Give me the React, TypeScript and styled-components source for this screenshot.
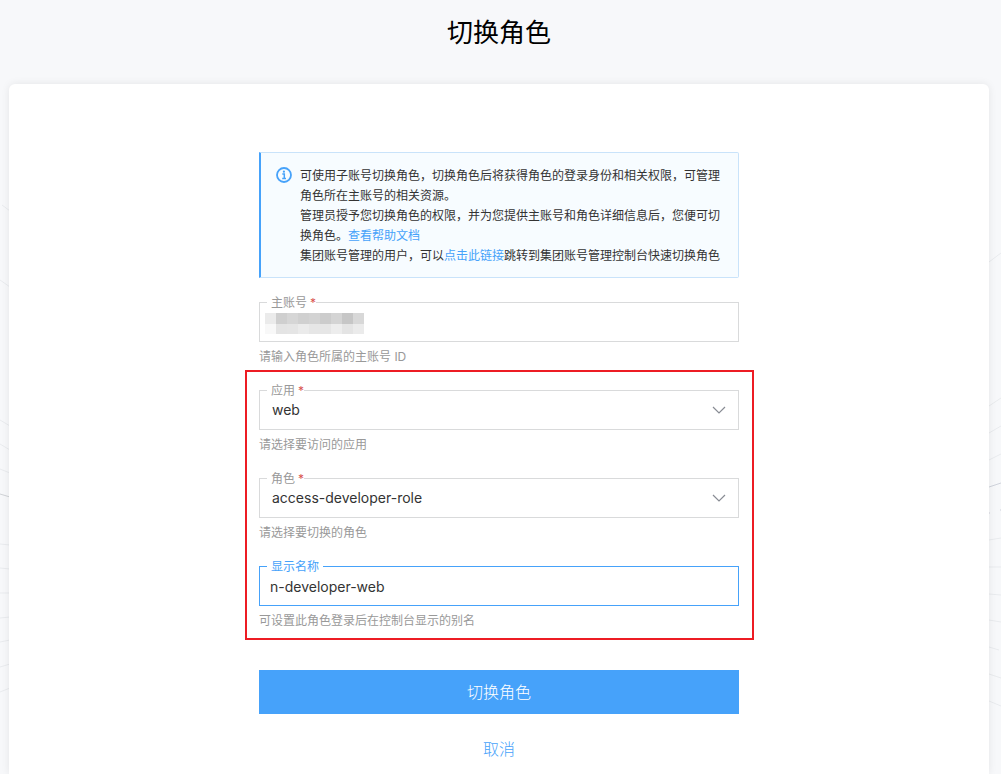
import React from "react";
import styled, { createGlobalStyle } from "styled-components";

const GlobalStyle = createGlobalStyle`
  *, *::before, *::after { box-sizing: border-box; }
  body {
    margin: 0;
    background: #f7f8fa;
    font-family: Inter, "Noto Sans CJK SC", sans-serif;
    font-size: 12px;
    line-height: 20px;
    color: #333;
  }
`;

const Page = styled.div`
  position: relative;
  min-height: 100vh;
  display: flex;
  flex-direction: column;
  padding: 0 12px 0 9px;
  overflow: hidden;
`;

const Pattern = styled.svg<{ $side: "left" | "right" }>`
  position: absolute;
  top: 0;
  ${(p) => p.$side}: 0;
  fill: none;
  stroke: #e9ebee;
`;

const Title = styled.h1`
  margin: 13px 0 31px;
  font-size: 26px;
  line-height: 40px;
  font-weight: 400;
  text-align: center;
  color: #000;
`;

const Card = styled.main`
  position: relative;
  flex: 1;
  display: flex;
  justify-content: center;
  padding: 68px 16px 8px;
  background: #fff;
  border-radius: 6px 6px 0 0;
  box-shadow: 0 0 8px rgba(0, 0, 0, 0.08);
`;

const Form = styled.form`
  width: 100%;
  max-width: 480px;
  display: flex;
  flex-direction: column;
`;

const Notice = styled.section`
  display: flex;
  align-items: flex-start;
  gap: 8px;
  padding: 13px 8px 11px 15px;
  margin-bottom: 24px;
  background: #f7fcff;
  border: 1px solid #c9e3fa;
  border-left: 2px solid #46a2fa;
  border-radius: 0 2px 2px 0;
`;

const NoticeIcon = styled.svg`
  flex: none;
  width: 16px;
  height: 16px;
  margin-top: 1px;
`;

const NoticeText = styled.div`
  flex: 1;
`;

const Paragraph = styled.p`
  margin: 0;
`;

const Link = styled.a`
  color: #46a2fa;
  text-decoration: none;
`;

const Field = styled.div``;

const Box = styled.div`
  position: relative;
  height: 40px;
`;

const Label = styled.label<{ $required?: boolean; $active?: boolean }>`
  position: absolute;
  top: -9px;
  left: 8px;
  z-index: 1;
  padding: 0 ${(p) => (p.$required ? 0 : 4)}px 0 4px;
  background: #fff;
  color: ${(p) => (p.$active ? "#46a2fa" : "#999")};
`;

const Star = styled.span`
  margin-left: 3px;
  color: #d9534f;
`;

const TextInput = styled.input<{ $active?: boolean }>`
  width: 100%;
  height: 40px;
  padding: 0 10px;
  border: 1px solid ${(p) => (p.$active ? "#46a2fa" : "#d9dadb")};
  border-radius: 0;
  background: #fff;
  color: #333;
  font: inherit;
  font-size: 14px;
  outline: none;
`;

const Select = styled.select`
  appearance: none;
  width: 100%;
  height: 40px;
  padding: 0 36px 0 12px;
  border: 1px solid #d9dadb;
  border-radius: 0;
  background: #fff;
  color: #333;
  font: inherit;
  font-size: 14px;
  outline: none;
`;

const Arrow = styled.svg`
  position: absolute;
  top: 16px;
  right: 13px;
  width: 14px;
  height: 8px;
  pointer-events: none;
`;

const Mosaic = styled.svg`
  position: absolute;
  top: 11px;
  left: 6px;
  width: 99px;
  height: 21px;
`;

const Hint = styled.p`
  margin: 4px 0 0;
  line-height: 22px;
  color: #999;
`;

const Highlight = styled.div`
  display: flex;
  flex-direction: column;
  gap: 22px;
  margin: 2px -15px 30px -14px;
  padding: 18px 13px 6px 12px;
  border: 2px solid #ed1c24;
`;

const Submit = styled.button`
  height: 44px;
  border: 0;
  background: #46a2fa;
  color: #fff;
  font: inherit;
  font-size: 16px;
  font-weight: 300;
  cursor: pointer;
`;

const Cancel = styled.button`
  align-self: center;
  margin-top: 20px;
  padding: 0 8px;
  border: 0;
  background: none;
  color: #46a2fa;
  font: inherit;
  font-size: 16px;
  font-weight: 300;
  line-height: 30px;
  cursor: pointer;
`;

const MOSAIC = [
  ["#ebebeb", "#cfcfcf", "#d6d6d6", "#d0d0d0", "#d3d3d3", "#cccccc", "#d4d4d4", "#c6c6c6", "#d8d8d8"],
  ["#f8f8f8", "#e4e4e4", "#e5e5e5", "#ebebeb", "#e6e6e6", "#e6e6e6", "#ededed", "#e4e4e4", "#ebebeb"],
];

function SelectField({ id, label, value, hint }: { id: string; label: string; value: string; hint: string }) {
  return (
    <Field>
      <Box>
        <Label htmlFor={id} $required>
          {label}
          <Star>*</Star>
        </Label>
        <Select id={id} defaultValue={value}>
          <option>{value}</option>
        </Select>
        <Arrow viewBox="0 0 14 8" fill="none" stroke="#888c94" strokeWidth="1.2">
          <path d="M1 1 L7 7 L13 1" />
        </Arrow>
      </Box>
      <Hint>{hint}</Hint>
    </Field>
  );
}

export default function App() {
  return (
    <Page>
      <GlobalStyle />
      <Pattern $side="left" width="10" height="774" aria-hidden="true">
        <path d="M2 205 L10 211 M0 280 L10 287 M0 420 L10 426 M0 444 L10 450 M0 469 L10 473 M0 544 L10 545 M0 568 L10 569 M0 593 L10 593 M0 618 L10 617 M0 642 L10 640 M0 667 L10 664 M0 692 L10 688" />
        <path d="M0 494 L10 497" stroke="#cfd2d6" />
      </Pattern>
      <Pattern $side="right" width="12" height="774" aria-hidden="true">
        <path d="M0 262 L12 253 M0 406 L12 398 M0 433 L12 426 M0 460 L12 454 M0 540 L12 538 M0 567 L12 567 M0 594 L12 595 M0 620 L12 622 M0 647 L10 650 M0 674 L12 678 M0 701 L12 706" />
        <path d="M0 487 L12 483 M0 513 H1 M11 510 H12" stroke="#cfd2dc" />
      </Pattern>
      <Title>切换角色</Title>
      <Card>
        <Form onSubmit={(e) => e.preventDefault()}>
          <Notice>
            <NoticeIcon viewBox="0 0 16 16" fill="none" stroke="#46a2fa">
              <circle cx="8" cy="8" r="7" strokeWidth="1.8" />
              <path d="M6.3 7.1 H8.3 V11.4 M6.2 11.5 H10" strokeWidth="1.5" />
              <circle cx="7.9" cy="4.7" r="1.1" fill="#46a2fa" stroke="none" />
            </NoticeIcon>
            <NoticeText>
              <Paragraph>
                可使用子账号切换角色，切换角色后将获得角色的登录身份和相关权限，可管理角色所在主账号的相关资源。
              </Paragraph>
              <Paragraph>
                管理员授予您切换角色的权限，并为您提供主账号和角色详细信息后，您便可切换角色。<Link href="#help">查看帮助文档</Link>
              </Paragraph>
              <Paragraph>
                集团账号管理的用户，可以<Link href="#group">点击此链接</Link>跳转到集团账号管理控制台快速切换角色
              </Paragraph>
            </NoticeText>
          </Notice>
          <Field>
            <Box>
              <Label htmlFor="account" $required>
                主账号
                <Star>*</Star>
              </Label>
              <TextInput id="account" />
              <Mosaic shapeRendering="crispEdges" aria-hidden="true">
                {MOSAIC.map((row, y) =>
                  row.map((fill, x) => <rect key={`${x}-${y}`} x={x * 11} y={y * 11} width="11" height="11" fill={fill} />)
                )}
              </Mosaic>
            </Box>
            <Hint>请输入角色所属的主账号 ID</Hint>
          </Field>
          <Highlight>
            <SelectField id="application" label="应用" value="web" hint="请选择要访问的应用" />
            <SelectField id="role" label="角色" value="access-developer-role" hint="请选择要切换的角色" />
            <Field>
              <Box>
                <Label htmlFor="alias" $active>
                  显示名称
                </Label>
                <TextInput id="alias" defaultValue="n-developer-web" $active />
              </Box>
              <Hint>可设置此角色登录后在控制台显示的别名</Hint>
            </Field>
          </Highlight>
          <Submit type="submit">切换角色</Submit>
          <Cancel type="button">取消</Cancel>
        </Form>
      </Card>
    </Page>
  );
}
